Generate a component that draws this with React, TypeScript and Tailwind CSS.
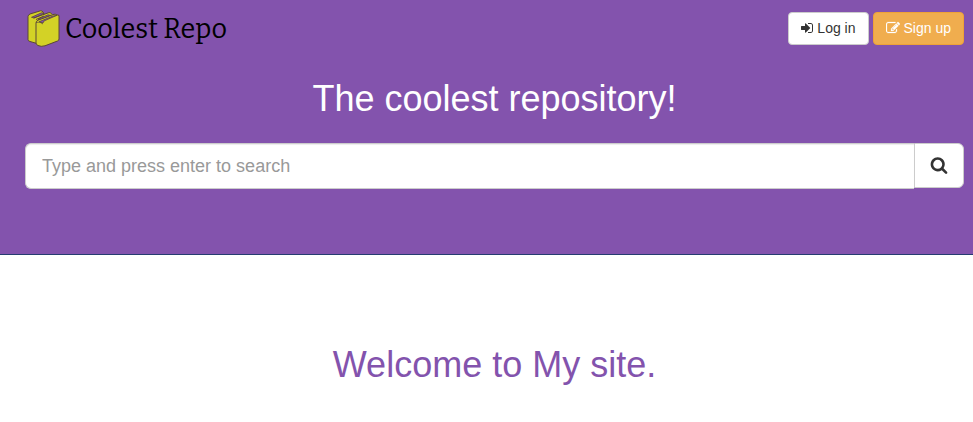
import React from "react";

function BooksLogo() {
  return (
    <svg viewBox="0 0 34 38" className="h-[38px] w-[34px]" fill="#d3d226" stroke="#5a4638" strokeWidth="1" strokeLinejoin="round" aria-hidden="true">
      <path d="M1 6.500 Q1 5 3 4 L13.500 .8 Q15 .6 16 2 L17 4 L17 32 L10 33.500 L3 31.500 Q1 31 1 29.500 Z" />
      <path d="M4.500 7.300 L14.500 2.800 L17 3.500 L7.500 8 Z" fill="#8353ad" strokeWidth=".8" />
      <path d="M7.500 8.500 L22 2.600 Q24 2.400 25 4 L25 30 L10 33 L7.500 31 Z" stroke="none" />
      <path d="M6.500 8 L22 2.600 Q24 2.200 25 4.500 M9 9.500 L17 6" fill="none" />
      <path d="M11 9.200 L21 4.800 L23.500 5.300 L13 10 Z" fill="#8353ad" strokeWidth=".8" />
      <path d="M9 13 Q9 11 11 10.200 L27 4.300 Q29 4 30 5 Q32 4.500 32 6 L32 29 Q32 30.500 30.500 31 L18 35.800 Q14 37 11 35.500 Q9 34.500 9 33 Z" />
      <path d="M12 11.800 L26 6 L30 5.300 L18 10.500 Q16 11.500 16 13 Z" fill="#8353ad" strokeWidth=".8" />
      <path d="M9 12.500 Q13 11 16 14" fill="none" strokeWidth=".7" />
    </svg>
  );
}

function SignInIcon() {
  return (
    <svg viewBox="128 0 1536 1792" className="h-[14px] w-[12px]" fill="currentColor" aria-hidden="true">
      <path d="M1312 896q0 26-19 45l-544 544q-19 19-45 19t-45-19-19-45v-288h-448q-26 0-45-19t-19-45v-384q0-26 19-45t45-19h448v-288q0-26 19-45t45-19 45 19l544 544q19 19 19 45zm352-352v704q0 119-84.5 203.5t-203.5 84.5h-320q-13 0-22.5-9.5t-9.5-22.5q0-4-1-20t-.5-26.5 3-23.5 10-19.5 20.5-6.5h320q66 0 113-47t47-113v-704q0-66-47-113t-113-47h-312l-11.5-1-11.5-3-8-5.5-7-9-2-13.5q0-4-1-20t-.5-26.5 3-23.5 10-19.5 20.5-6.5h320q119 0 203.5 84.5t84.5 203.5z" />
    </svg>
  );
}

function EditIcon() {
  return (
    <svg viewBox="0 0 1792 1792" className="size-[14px]" fill="currentColor" stroke="currentColor" strokeWidth="30" aria-hidden="true">
      <path d="M888 1184l116-116-152-152-116 116v56h96v96h56zm440-720q-16-16-33 1l-350 350q-17 17-1 33t33-1l350-350q17-17 1-33zm80 594v190q0 119-84.5 203.5t-203.5 84.5h-832q-119 0-203.5-84.5t-84.5-203.5v-832q0-119 84.5-203.5t203.5-84.5h832q63 0 117 25 15 7 18 23 3 17-9 29l-49 49q-14 14-32 8-23-6-45-6h-832q-66 0-113 47t-47 113v832q0 66 47 113t113 47h832q66 0 113-47t47-113v-126q0-13 9-22l64-64q15-15 35-7t20 29zm-96-738l288 288-672 672h-288v-288zm444 132l-92 92-288-288 92-92q28-28 68-28t68 28l152 152q28 28 28 68t-28 68z" />
    </svg>
  );
}

function SearchIcon() {
  return (
    <svg viewBox="0 0 1792 1792" className="size-[18px]" fill="currentColor" aria-hidden="true">
      <path d="M1216 832q0-185-131.5-316.5t-316.5-131.5-316.5 131.5-131.5 316.5 131.5 316.5 316.5 131.5 316.5-131.5 131.5-316.5zm512 832q0 52-38 90t-90 38q-54 0-90-38l-343-342q-179 124-399 124-143 0-273.5-55.5t-225-150-150-225-55.5-273.5 55.5-273.5 150-225 225-150 273.5-55.5 273.5 55.5 225 150 150 225 55.5 273.5q0 220-124 399l343 343q37 37 37 90z" />
    </svg>
  );
}

export default function App() {
  return (
    <div className="bg-white font-['Liberation_Sans',Arial,sans-serif] text-sm text-[#333]">
      <header className="border-b border-[#253c70] bg-[#8353ad] pr-[9px] pb-[65px] pl-[25px]">
        <nav className="flex items-start justify-between pt-[10px]">
          <a href="#" className="flex items-center gap-1 pl-[2px] text-black">
            <BooksLogo />
            <span className="font-['Bitter','DejaVu_Serif_Condensed','DejaVu_Serif',serif] text-[27px] leading-[38px] whitespace-nowrap">Coolest Repo</span>
          </a>
          <div className="flex gap-1 pt-[2px]">
            <button type="button" className="flex h-[33px] items-center gap-1 rounded border border-[#ccc] bg-white px-3 pb-px leading-5 text-[#333]">
              <SignInIcon />
              Log in
            </button>
            <button type="button" className="flex h-[33px] items-center gap-1 rounded border border-[#eea236] bg-[#f0ad4e] px-3 pb-px leading-5 text-white">
              <EditIcon />
              Sign up
            </button>
          </div>
        </nav>
        <h1 className="pt-[31px] text-center text-[36px] leading-10 text-white">The coolest repository!</h1>
        <form className="flex items-start pt-6" onSubmit={(e) => e.preventDefault()}>
          <input
            type="search"
            aria-label="Search"
            placeholder="Type and press enter to search"
            className="h-[46px] min-w-0 flex-1 rounded-l-md border border-r-0 border-[#ccc] bg-white px-4 text-lg text-[#555] shadow-[inset_0_1px_1px_rgba(0,0,0,0.075)] outline-none placeholder:text-[#999]"
          />
          <button type="submit" aria-label="Submit search" className="flex h-[45px] w-[50px] items-center justify-center rounded-r-md border border-[#ccc] bg-white pb-[2px] text-[#333]">
            <SearchIcon />
          </button>
        </form>
      </header>
      <main className="pt-[90px] pr-[9px] pb-[37px] pl-[25px]">
        <h2 className="text-center text-[36px] leading-10 text-[#8353ad]">Welcome to My site.</h2>
      </main>
    </div>
  );
}
